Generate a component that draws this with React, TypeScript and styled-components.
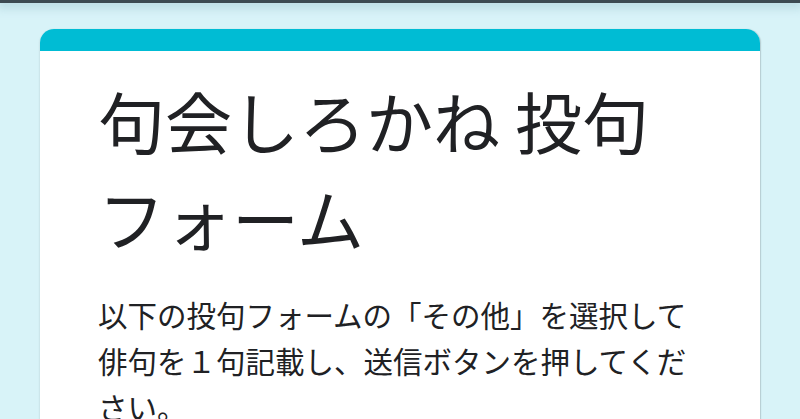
import React from "react";
import styled, { createGlobalStyle } from "styled-components";

const Global = createGlobalStyle`
  html, body {
    margin: 0;
    padding: 0;
    background: #d8f3f8;
  }
  body {
    font-family: "Noto Sans CJK JP", "Noto Sans", sans-serif;
  }
`;

const Page = styled.div`
  width: 800px;
  height: 419px;
  overflow: hidden;
  background: #d8f3f8;
  display: flex;
  flex-direction: column;
`;

const TopBar = styled.div`
  height: 3px;
  flex: none;
  background: #3c4a52;
  box-shadow: 0 2px 10px 3px rgba(120, 170, 185, 0.35);
`;

const Main = styled.main`
  padding: 26px 40px 0;
  display: flex;
  flex-direction: column;
`;

const Card = styled.section`
  background: #ffffff;
  border-radius: 14px 14px 0 0;
  overflow: hidden;
  box-shadow: 0 1px 2px rgba(60, 64, 67, 0.25), 1px 0 1px rgba(60, 64, 67, 0.15);
`;

const Accent = styled.div`
  height: 22px;
  background: #00bcd4;
`;

const Body = styled.div`
  padding: 20px 58px 0;
  display: flex;
  flex-direction: column;
  gap: 26px;
`;

const Title = styled.h1`
  margin: 0;
  font-weight: 400;
  font-size: 67px;
  line-height: 97px;
  color: #202124;
  line-break: strict;
`;

const Description = styled.p`
  margin: 0;
  font-weight: 400;
  font-size: 29.5px;
  line-height: 46px;
  color: #202124;
`;

export default function App() {
  return (
    <>
      <Global />
      <Page>
        <TopBar />
        <Main>
          <Card>
            <Accent />
            <Body>
              <Title>句会しろかね 投句フォーム</Title>
              <Description>
                以下の投句フォームの「その他」を選択して俳句を１句記載し、送信ボタンを押してください。
              </Description>
            </Body>
          </Card>
        </Main>
      </Page>
    </>
  );
}
